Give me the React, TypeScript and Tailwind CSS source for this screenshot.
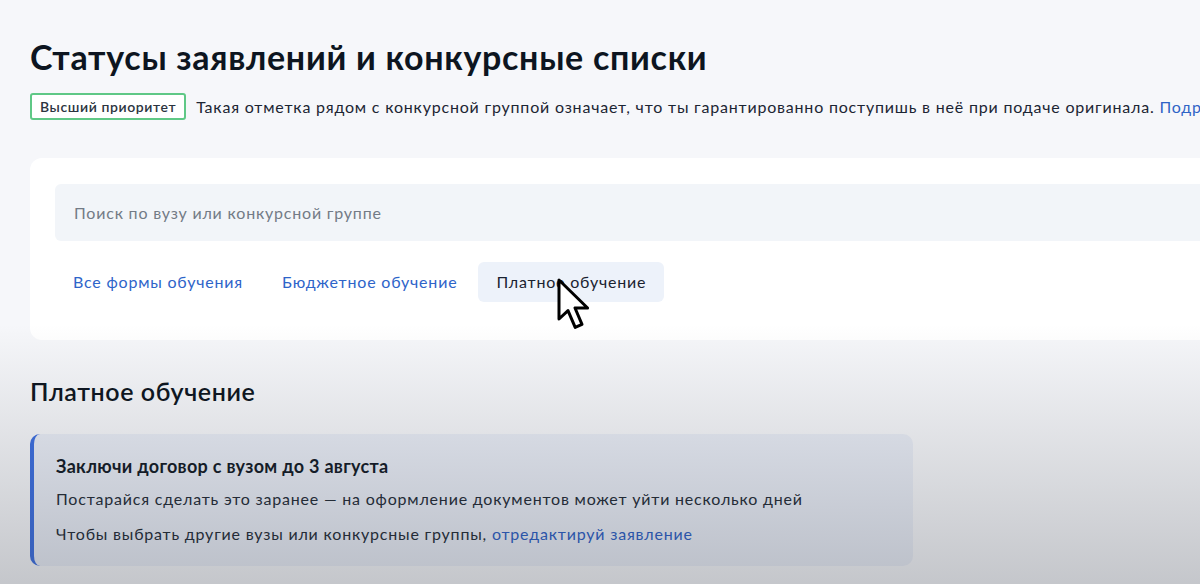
import React from 'react';

const tabs = [
  { label: 'Все формы обучения', active: false },
  { label: 'Бюджетное обучение', active: false },
  { label: 'Платное обучение', active: true },
];

const Cursor = () => (
  <svg
    className="pointer-events-none absolute left-[556px] top-[277px]"
    width="38"
    height="56"
    viewBox="0 0 19 28"
  >
    <path
      d="M1.5 1.5 L1.5 21 L6 16.8 L9.6 25.2 L13 23.7 L9.5 15.5 L15.8 15.5 Z"
      fill="#fff"
      stroke="#000"
      strokeWidth="1.5"
      strokeLinejoin="round"
    />
  </svg>
);

export default function App() {
  return (
    <div className="relative h-[584px] w-[1200px] overflow-hidden bg-[#f6f7fa] font-['Lato','Noto_Sans',sans-serif] text-[#0b1f33]">
      <div className="pl-[30px] pt-[35px]">
        <h1 className="text-[34px] font-bold leading-[44px] tracking-[0.7px] text-[#0d1520]">
          Статусы заявлений и конкурсные списки
        </h1>

        <div className="mt-[14px] flex items-center whitespace-nowrap">
          <span className="rounded-[3px] border-2 border-[#5fc886] bg-white px-[8px] py-[2px] text-[14px] font-semibold leading-[19px] tracking-[0.6px] text-[#2b3440]">
            Высший приоритет
          </span>
          <span className="ml-[10px] text-[16px] leading-[20px] tracking-[0.8px] text-[#1c2533]">
            Такая отметка рядом с конкурсной группой означает, что ты гарантированно поступишь в неё при подаче оригинала.{' '}
            <span className="text-[#2f63c6]">Подробнее</span>
          </span>
        </div>

        <div className="mt-[38px] -mr-[40px] rounded-[12px] bg-white px-[25px] pb-[38px] pt-[26px] tracking-[0.8px]">
          <div className="flex h-[57px] items-center rounded-[6px] bg-[#f2f5f9] px-[19px] text-[16px] text-[#737b86]">
            Поиск по вузу или конкурсной группе
          </div>
          <div className="mt-[21px] flex gap-[3px]">
            {tabs.map((t) => (
              <div
                key={t.label}
                className={
                  t.active
                    ? 'flex h-[40px] items-center rounded-[6px] bg-[#edf2fa] px-[18px] text-[16px] text-[#1a2230]'
                    : 'flex h-[40px] items-center px-[18px] text-[16px] text-[#2e64c9]'
                }
              >
                {t.label}
              </div>
            ))}
          </div>
        </div>

        <h2 className="mt-[35px] text-[25px] font-semibold leading-[32px] tracking-[0.6px] text-[#0d1520]">
          Платное обучение
        </h2>

        <div className="mt-[27px] w-[883px] rounded-[10px] border-l-[4px] border-[#3d6fe0] bg-[#e9edf6] pb-[21px] pl-[22px] pt-[20px]">
          <div className="text-[18px] font-bold leading-[24px] tracking-[0.3px] text-[#121a26]">
            Заключи договор с вузом до 3 августа
          </div>
          <p className="mt-[10px] text-[16px] leading-[22px] tracking-[0.8px] text-[#232b36]">
            Постарайся сделать это заранее — на оформление документов может уйти несколько дней
          </p>
          <p className="mt-[13px] text-[16px] leading-[22px] tracking-[0.8px] text-[#232b36]">
            Чтобы выбрать другие вузы или конкурсные группы,{' '}
            <span className="text-[#2c5ec4]">отредактируй заявление</span>
          </p>
        </div>
      </div>

      <div className="pointer-events-none absolute inset-x-0 bottom-0 h-[260px] bg-gradient-to-b from-transparent to-[rgba(40,45,55,0.24)]" />
      <Cursor />
    </div>
  );
}
